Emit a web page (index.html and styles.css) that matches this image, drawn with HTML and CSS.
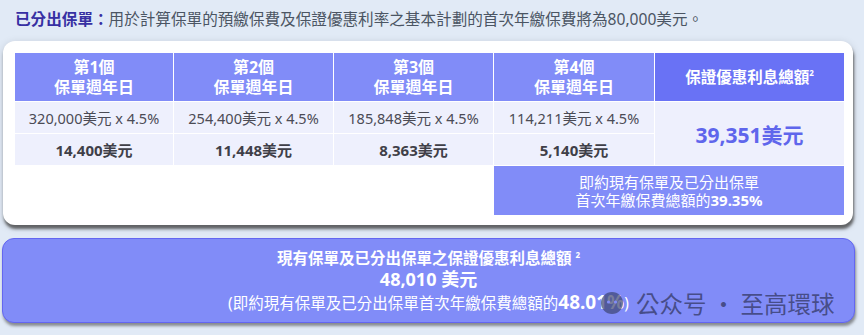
FILE: index.html
```html
<!DOCTYPE html>
<html lang="zh-Hant">
<head>
<meta charset="utf-8">
<link rel="stylesheet" href="styles.css">
</head>
<body>
<p class="intro"><b class="label">已分出保單：</b>用於計算保單的預繳保費及保證優惠利率之基本計劃的首次年繳保費將為80,000美元。</p>
<div class="card">
  <div class="grid">
    <div class="th"><span>第1個<br>保單週年日</span></div>
    <div class="th"><span>第2個<br>保單週年日</span></div>
    <div class="th"><span>第3個<br>保單週年日</span></div>
    <div class="th"><span>第4個<br>保單週年日</span></div>
    <div class="th th-total"><span>保證優惠利息總額<sup>2</sup></span></div>
    <div class="td">320,000美元 x 4.5%</div>
    <div class="td">254,400美元 x 4.5%</div>
    <div class="td">185,848美元 x 4.5%</div>
    <div class="td">114,211美元 x 4.5%</div>
    <div class="td total">39,351美元</div>
    <div class="td strong">14,400美元</div>
    <div class="td strong">11,448美元</div>
    <div class="td strong">8,363美元</div>
    <div class="td strong">5,140美元</div>
    <div class="note"><span>即約現有保單及已分出保單<br>首次年繳保費總額的<b>39.35%</b></span></div>
  </div>
</div>
<div class="summary">
  <div class="s1">現有保單及已分出保單之保證優惠利息總額 <sup>2</sup></div>
  <div class="s2">48,010 美元</div>
  <div class="s3">(即約現有保單及已分出保單首次年繳保費總額的<b>48.01%</b>)</div>
  <div class="watermark">
    <svg class="wm-icon" width="24" height="24" viewBox="0 0 24 24"><circle cx="12" cy="12" r="11" fill="#3d4470" opacity="0.7"/><circle cx="8.5" cy="11" r="1.6" fill="#818cf8"/><circle cx="15.5" cy="11" r="1.6" fill="#818cf8"/></svg>
    <span>公众号 · 至高環球</span>
  </div>
</div>
</body>
</html>
```
FILE: styles.css
```css
html, body { margin: 0; padding: 0; }
body {
  background: #e1eaf6;
  font-family: "Noto Sans", "Noto Sans CJK TC", sans-serif;
  width: 864px;
  height: 335px;
  overflow: hidden;
  position: relative;
}
.intro {
  margin: 0;
  padding: 8px 15px 0 15px;
  font-size: 15.6px;
  line-height: 22px;
  color: #4b5563;
  box-sizing: border-box;
  height: 41px;
}
.label { color: #3730a3; font-weight: 700; }
.card {
  margin: 0 11px 0 3px;
  background: #fff;
  border-radius: 12px;
  padding: 12px 8px 10px 12px;
  box-shadow: 1px 4px 3px rgba(60,60,60,0.75), 0 2px 8px rgba(0,0,0,0.15);
}
.grid {
  display: grid;
  grid-template-columns: 158px 159px 159px 160px 189px;
  grid-template-rows: 48px 31px 31px 49px;
  gap: 1px;
}
.th {
  background: #818cf8;
  color: #fff;
  font-weight: 700;
  font-size: 16px;
  line-height: 20px;
  display: flex;
  align-items: center;
  justify-content: center;
  text-align: center;
}
.th-total { background: #6972f5; font-size: 15.5px; }
.th-total sup { font-size: 8px; vertical-align: 7px; line-height: 0; }
.td {
  background: #eef0fd;
  color: #4b4b55;
  font-size: 14.5px;
  display: flex;
  align-items: center;
  justify-content: center;
}
.strong { font-weight: 700; color: #3f3f48; font-size: 15px; }
.total {
  grid-column: 5;
  grid-row: 2 / 4;
  color: #5f66ec;
  font-size: 21px;
  font-weight: 700;
}
.note {
  grid-column: 4 / 6;
  grid-row: 4;
  background: #818cf8;
  color: #fff;
  font-size: 15px;
  line-height: 18px;
  text-align: center;
  display: flex;
  align-items: center;
  justify-content: center;
}
.summary {
  position: relative;
  margin: 13px 9px 0 2px;
  height: 85px;
  background: #818cf8;
  border: 1px solid #6366f1;
  border-radius: 12px;
  box-shadow: 1px 3px 3px rgba(60,60,60,0.55);
  color: #fff;
  text-align: center;
  display: flex;
  flex-direction: column;
  justify-content: center;
  box-sizing: border-box;
  padding-top: 2px;
}
.s1 { font-size: 15.5px; font-weight: 700; line-height: 21px; }
.s1 sup { font-size: 8px; vertical-align: 6px; line-height: 0; }
.s2 { font-size: 18px; font-weight: 700; line-height: 21px; }
.s3 { font-size: 15.5px; line-height: 24px; }
.s3 b { font-size: 19px; }
.watermark {
  position: absolute;
  left: 597px;
  top: 47px;
  display: flex;
  align-items: center;
  gap: 12px;
  color: rgba(52, 56, 100, 0.75);
  font-size: 23.5px;
  font-family: "Noto Sans CJK SC", sans-serif;
}
.wm-icon { display: block; }
```
